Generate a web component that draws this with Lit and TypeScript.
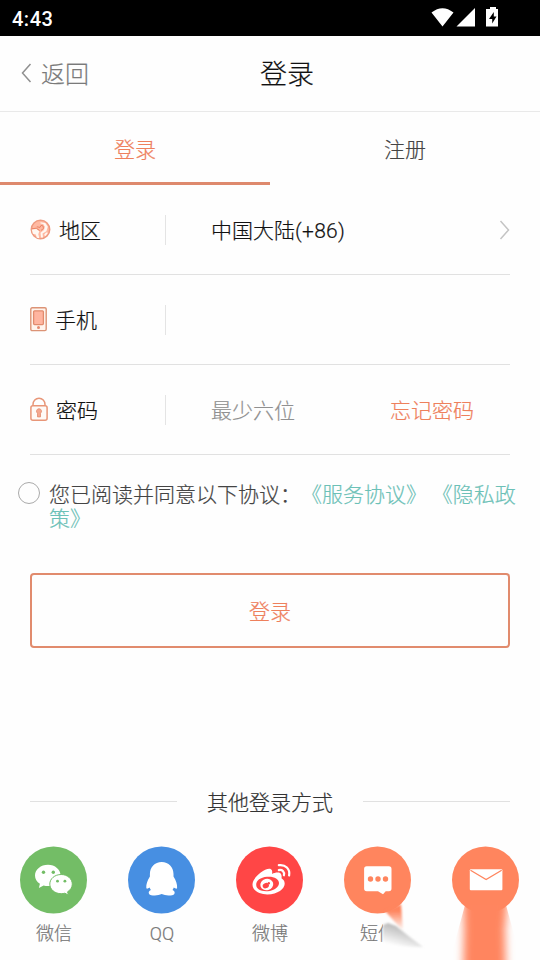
import { LitElement, html, css, svg } from "lit";
import { customElement } from "lit/decorators.js";

const wechat = svg`
  <g fill="#fff">
    <path d="M28.500 18.700c-7.300 0-13 4.800-13 10.800 0 3.400 1.900 6.300 4.900 8.300l-1 4.200 4.700-2.500c1.400.4 2.800.6 4.400.6 7 0 12.500-4.800 12.500-10.600 0-6-5.500-10.800-12.500-10.800z"/>
    <path d="M41.700 28.500c-6.500 0-11.400 4.300-11.400 9.600s4.900 9.600 11.400 9.600c1.300 0 2.500-.2 3.700-.5l3.500 1.900-.8-3.300c2.800-1.700 4.700-4.500 4.700-7.700 0-5.300-5-9.600-11.100-9.600z" stroke="#73bd66" stroke-width="1"/>
  </g>
  <g fill="#73bd66"><circle cx="24" cy="26.200" r="1.700"/><circle cx="33.800" cy="26.200" r="1.700"/><circle cx="38" cy="35.200" r="1.400"/><circle cx="45.400" cy="35.200" r="1.400"/></g>`;

const qq = svg`
  <path fill="#fff" d="M34.200 16c-7 0-11.800 5.300-11.800 12v2.500c-2.600 3.800-3.900 8.200-3.600 11.300.2 1.600 1.400 1.100 3.300-.2.300.9.700 1.600 1.300 2.300-2 .8-2.700 2.400-1.800 4 1.200 1.900 8.700 2.200 12.600.2 3.900 2 11.400 1.700 12.600-.2.900-1.600.2-3.200-1.800-4 .6-.7 1-1.400 1.300-2.300 1.900 1.300 3.100 1.800 3.300.2.300-3.100-1-7.500-3.600-11.300V28c0-6.700-4.800-12-11.800-12z"/>`;

const weibo = svg`
  <path fill="#fff" fill-rule="evenodd" d="M36.500 24.600c-1.200-3.500-6.300-1.800-11.300 2-4.800 3.600-8.200 8-8.200 11.800 0 6.100 7 10 14.800 10 10.600 0 17.400-5.800 17.400-10.700 0-3-1.600-4.200-3.200-5.400.5-2.500-.1-5.300-2.700-5.700-2-.3-4.800.2-6.800 1.400.3-1.300.3-2.400 0-3.400zM31.500 30.800c6.800-.6 12 2 12 6.200 0 4.200-5 7.700-11.300 8.200-6.700.5-11.500-2.200-11.500-6.400 0-4.300 4.200-7.400 10.800-8z"/>
  <ellipse cx="31.300" cy="38.500" rx="6.500" ry="5.700" transform="rotate(-15 31.300 38.500)" fill="#fff"/>
  <ellipse cx="30.300" cy="39.600" rx="3.200" ry="2.600" transform="rotate(-20 30.300 39.600)" fill="#ff4646"/><circle cx="33.300" cy="37.200" r="1.200" fill="#ff4646"/>
  <path d="M43.300 19.200c6.600-1 11.500 3.800 10.300 10.300M43.300 24.100c3.500-.7 5.900 1.700 5.100 5.200" fill="none" stroke="#fff" stroke-width="2.200" stroke-linecap="round"/>`;

const sms = svg`
  <path fill="#fff" d="M23.200 20.300h22.200a2.600 2.600 0 0 1 2.600 2.600v19.700a2.600 2.600 0 0 1-2.600 2.600h-3.200l-2.700 3-5-3H23.200a2.600 2.600 0 0 1-2.600-2.600V22.900a2.600 2.600 0 0 1 2.600-2.600z"/>
  <g fill="#ff855e"><circle cx="27" cy="33" r="2.700"/><circle cx="34.500" cy="33" r="2.700"/><circle cx="42" cy="33" r="2.700"/></g>`;

const mail = svg`
  <rect x="18.300" y="23.300" width="32.600" height="21" rx="1" fill="#fff"/>
  <path d="M19 24.200l15.600 9.400 15.600-9.400" fill="none" stroke="#ff855e" stroke-width="1.300"/>`;

const methods = [
  { label: "微信", color: "#73bd66", art: wechat },
  { label: "QQ", color: "#478fe2", art: qq },
  { label: "微博", color: "#ff4646", art: weibo },
  { label: "短信", color: "#ff855e", art: sms },
  { label: "", color: "#ff855e", art: mail },
];

@customElement("app-root")
export class AppRoot extends LitElement {
  static styles = css`
    :host {
      display: flex;
      flex-direction: column;
      position: relative;
      height: 960px;
      width: 540px;
      overflow: hidden;
      box-sizing: border-box;
      background: #fefefe;
      color: #111;
      font: 300 21px/30px Roboto, "Noto Sans CJK SC", sans-serif;
      -webkit-text-stroke: .2px currentColor;
    }
    * { box-sizing: border-box; }
    svg { display: block; flex: none; }
    .status {
      height: 36px; flex: none; background: #000; color: #fff;
      display: flex; align-items: center; justify-content: space-between;
      padding: 1px 41px 0 12px; font-size: 20px; font-weight: 500; letter-spacing: .5px;
      -webkit-text-stroke: 0;
    }
    .status svg { margin-top: -4px; }
    .header {
      height: 76px; flex: none; border-bottom: 1px solid #e9e9e9;
      display: grid; grid-template-columns: 1fr auto 1fr; align-items: center;
      padding: 0 0 0 20px;
    }
    .back { display: flex; align-items: center; gap: 8px; color: #7a7a7a; font-size: 24px; padding-top: 3px; }
    .back svg { margin-top: -4px; }
    .title { font-size: 27px; margin-left: 14px; padding-top: 2px; }
    .tabs { display: flex; height: 73px; flex: none; }
    .tab {
      flex: 1; display: flex; align-items: center; justify-content: center;
      border-bottom: 3px solid transparent; padding-top: 6px; color: #444;
    }
    .tab.active { color: #ee805c; border-color: #de896d; }
    .form { padding: 0 30px; }
    .row { height: 90px; display: flex; align-items: center; border-bottom: 1px solid #e1e1e1; }
    .label {
      width: 136px; height: 30px; border-right: 1px solid #e4e4e4;
      display: flex; align-items: center; gap: 8px; flex: none;
    }
    .label span { padding-top: 2px; }
    .value { flex: 1; padding: 2px 0 0 45px; }
    .latin { letter-spacing: .3px; }
    .hint { color: #909090; }
    .forgot { color: #ee805c; padding: 2px 36px 0 0; }
    .agree { display: flex; padding: 27px 20px 0 18px; gap: 9px; height: 118px; flex: none; }
    .radio { width: 22px; height: 22px; border: 1px solid #aaa; border-radius: 50%; flex: none; }
    .terms { line-height: 24px; margin-top: -1px; color: #444; white-space: nowrap; font-family: "Noto Sans CJK SC", sans-serif; text-spacing-trim: space-all; }
    .terms a { color: #6cc1b7; }
    .submit {
      margin: 0 30px; height: 75px; flex: none; border: 2px solid #e18b6d; border-radius: 4px;
      background: #fefefe; color: #ee805c; font: inherit; padding: 2px 0 0;
      -webkit-text-stroke: inherit;
    }
    .other { display: flex; align-items: center; gap: 30px; margin: 138px 30px 0; height: 30px; color: #333; }
    .other span { padding-top: 4px; }
    .other::before, .other::after { content: ""; height: 1px; flex: 1; background: #e1e1e1; }
    .methods { display: flex; margin-top: 30px; height: 114px; }
    .method { width: 108px; flex: none; display: flex; flex-direction: column; align-items: center; color: #777; font-size: 18px; gap: 5px; }
    .trail { position: absolute; left: 340px; top: 890px; pointer-events: none; }
  `;

  render() {
    return html`
      <div class="status">
        <span>4:43</span>
        <svg width="68" height="20" viewBox="0 0 68 20" fill="#fff">
          <path d="M.5 5.500Q11.500-3 22.500 5.500L11.500 19.500zM25.500 19.500L44 1v18.500z"/>
          <path fill-rule="evenodd" d="M59 0h6v2h2v17.500H55V2h4zM62.800 5L58 12h3.200v4.500L65.500 9.500h-2.700z"/>
        </svg>
      </div>
      <div class="header">
        <div class="back">
          <svg width="13" height="20" viewBox="0 0 13 20" fill="none" stroke="#909090" stroke-width="1.500"><path d="M10.500 1L2.500 10l8 9"/></svg>
          <span>返回</span>
        </div>
        <div class="title">登录</div>
      </div>
      <div class="tabs"><div class="tab active">登录</div><div class="tab">注册</div></div>
      <div class="form">
        <div class="row">
          <div class="label">
            <svg width="21" height="21" viewBox="0 0 21 21"><circle cx="10.500" cy="10.500" r="9.200" fill="#ffb9a2" stroke="#ee9b80" stroke-width="1.500"/><path fill="#fff8f2" d="M1.800 10.500l4.500-.6 3 2.400-1 2.900 1 4.100-2.500-.5-1-3.300-2.900-.7zM10.500 3.200l4.800.8 2.500 3.800-1.400 4.400-3.900 2.400.5 4h-2l-.5-4.800 3.500-2.800.9-3.200-1.700-2.800-2.700-.4zM16 13.500l2 .3-2.500 3.200-1.500-1z"/><path fill="none" stroke="#ea8465" stroke-width="1" d="M1.800 9.800l4.500-.6 3.400 2.300M6.800 7.800l3.200.6 1-2 2 .5.500 2.600-2.600 2"/></svg>
            <span>地区</span>
          </div>
          <div class="value">中国大陆<span class="latin">(+86)</span></div>
          <svg width="12" height="20" viewBox="0 0 12 20" fill="none" stroke="#c4c4c4" stroke-width="1.500"><path d="M2.500 1l8 9-8 9"/></svg>
        </div>
        <div class="row">
          <div class="label">
            <svg width="17" height="25" viewBox="0 0 17 25"><rect x=".8" y=".8" width="15.400" height="22.800" rx="1.300" fill="#fff4ed" stroke="#dc9376" stroke-width="1.400"/><rect x="3.600" y="3.800" width="9.800" height="13.800" rx="1" fill="#ffb5a0" stroke="#e18b6d" stroke-width="1.300"/><circle cx="8.500" cy="20.600" r="1.500" fill="#e58a70"/></svg>
            <span>手机</span>
          </div>
          <div class="value"></div>
        </div>
        <div class="row">
          <div class="label">
            <svg width="18" height="25" viewBox="0 0 18 25"><path d="M3 9V7.500a6 6.300 0 0 1 12 0V9" fill="none" stroke="#e89678" stroke-width="1.500"/><rect x=".9" y="8.700" width="16.200" height="14.600" rx="2" fill="#fffaf7" stroke="#e89678" stroke-width="1.500"/><path d="M9 11.700a2.500 2.500 0 0 1 1.500 4.500v3.700h-3v-3.700A2.500 2.500 0 0 1 9 11.700z" fill="#f5a78f" stroke="#e18b6d" stroke-width=".8"/></svg>
            <span>密码</span>
          </div>
          <div class="value hint">最少六位</div>
          <div class="forgot">忘记密码</div>
        </div>
      </div>
      <div class="agree">
        <div class="radio"></div>
        <div class="terms">您已阅读并同意以下协议：<a>《服务协议》</a> <a>《隐私政<br />策》</a></div>
      </div>
      <button class="submit">登录</button>
      <div class="other"><span>其他登录方式</span></div>
      <div class="methods">
        ${methods.map(
          (m) => html`<div class="method">
            <svg width="68" height="68" viewBox="0.5 0 68 68"><circle cx="34" cy="34" r="33.500" fill=${m.color} />${m.art}</svg>
            <span>${m.label}</span>
          </div>`
        )}
      </div>
      <svg class="trail" width="200" height="70" viewBox="0 0 200 70">
        <defs>
          <linearGradient id="drop" x2="0" y2="1"><stop offset="0.250" stop-color="#ff855e"/><stop offset="1" stop-color="#ff855e" stop-opacity="0"/></linearGradient>
          <linearGradient id="shade" gradientUnits="userSpaceOnUse" x1="54" y1="34" x2="48" y2="54"><stop offset="0" stop-color="#b8b8b8"/><stop offset="1" stop-color="#fefefe"/></linearGradient>
          <filter id="soft" x="-20%" y="-20%" width="140%" height="140%"><feGaussianBlur stdDeviation=".9"/></filter>
          <filter id="wide" filterUnits="userSpaceOnUse" x="90" y="-30" width="110" height="160"><feGaussianBlur stdDeviation="4 1"/></filter>
          <clipPath id="below"><path d="M125 15h41l15 55h-71z"/></clipPath>
        </defs>
        <g clip-path="url(#below)"><path d="M123 6h45l-3 34 1 50h-43l1-50z" fill="#ff855e" filter="url(#wide)"/></g>
        <rect x="43" y="34" width="16" height="20" fill="#fefefe"/>
        <path d="M45 21L52 18L61 14L63 41z" fill="url(#drop)" filter="url(#soft)"/>
        <path d="M43 35L48 33L56 36Q68 46 83 57Q62 57 43 53z" fill="url(#shade)" filter="url(#soft)"/>
      </svg>
    `;
  }
}
